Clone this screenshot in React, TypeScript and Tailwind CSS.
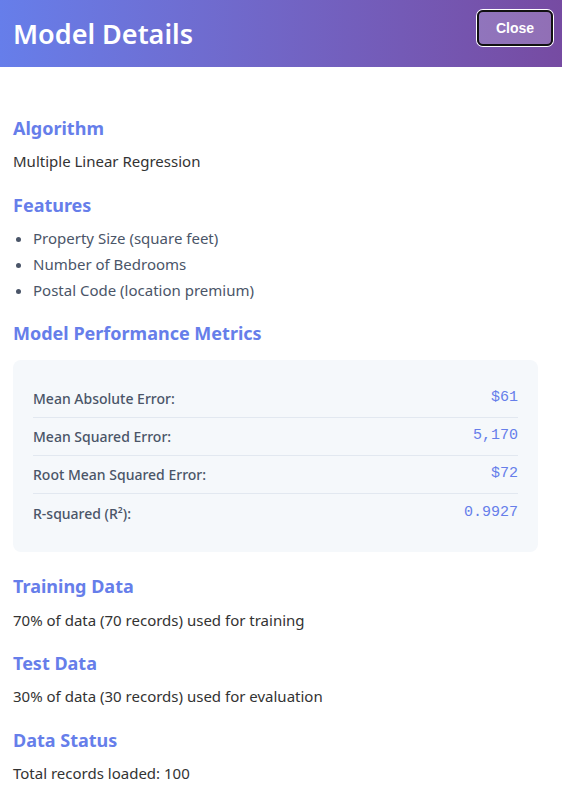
const features = [
  "Property Size (square feet)",
  "Number of Bedrooms",
  "Postal Code (location premium)",
];

const metrics = [
  { label: "Mean Absolute Error:", value: "$61" },
  { label: "Mean Squared Error:", value: "5,170" },
  { label: "Root Mean Squared Error:", value: "$72" },
  { label: "R-squared (R²):", value: "0.9927" },
];

function Heading({ children }: { children: React.ReactNode }) {
  return (
    <h3 className="text-[18px] leading-[22px] font-bold text-[#667eea]">
      {children}
    </h3>
  );
}

export default function App() {
  return (
    <div
      className="w-[562px] h-[793px] bg-white overflow-hidden"
      style={{ fontFamily: '"Noto Sans", "Open Sans", sans-serif' }}
    >
      <header className="h-[67px] flex items-center justify-between pl-[13px] pr-[9px] bg-gradient-to-r from-[#667eea] to-[#764ba2]">
        <h2 className="text-[27px] font-semibold text-white leading-none">
          Model Details
        </h2>
        <button
          className="self-start mt-[10px] h-[36px] w-[76px] rounded-[6px] bg-white/20 border-2 border-[#111] ring-1 ring-white text-white text-[14px] font-bold"
          style={{ fontFamily: '"Liberation Sans", Arial, sans-serif' }}
        >
          Close
        </button>
      </header>

      <main className="px-[13px] pt-[50px]">
        <section>
          <Heading>Algorithm</Heading>
          <p className="mt-[11px] text-[15px] leading-[22px] text-[#333]">
            Multiple Linear Regression
          </p>
        </section>

        <section className="mt-[22px]">
          <Heading>Features</Heading>
          <ul className="mt-[11px] list-disc pl-[20px] text-[15px] text-[#4a5568]">
            {features.map((f) => (
              <li key={f} className="leading-[22px] mb-[4px]">
                {f}
              </li>
            ))}
          </ul>
        </section>

        <section className="mt-[21px]">
          <Heading>Model Performance Metrics</Heading>
          <div className="mt-[16px] w-[525px] rounded-[8px] bg-[#f5f8fb] px-[20px] py-[20px]">
            {metrics.map((m, i) => (
              <div
                key={m.label}
                className={`flex items-center justify-between h-[38px] ${
                  i < metrics.length - 1 ? "border-b border-[#e2e8f0]" : ""
                }`}
              >
                <span className="text-[14px] font-medium text-[#4a5568]">
                  {m.label}
                </span>
                <span
                  className="text-[15px] text-[#667eea]"
                  style={{ fontFamily: '"Liberation Mono", "Courier New", monospace' }}
                >
                  {m.value}
                </span>
              </div>
            ))}
          </div>
        </section>

        <section className="mt-[23px]">
          <Heading>Training Data</Heading>
          <p className="mt-[12px] text-[15px] leading-[22px] text-[#333]">
            70% of data (70 records) used for training
          </p>
        </section>

        <section className="mt-[21px]">
          <Heading>Test Data</Heading>
          <p className="mt-[11px] text-[15px] leading-[22px] text-[#333]">
            30% of data (30 records) used for evaluation
          </p>
        </section>

        <section className="mt-[22px]">
          <Heading>Data Status</Heading>
          <p className="mt-[11px] text-[15px] leading-[22px] text-[#333]">
            Total records loaded: 100
          </p>
        </section>
      </main>
    </div>
  );
}
